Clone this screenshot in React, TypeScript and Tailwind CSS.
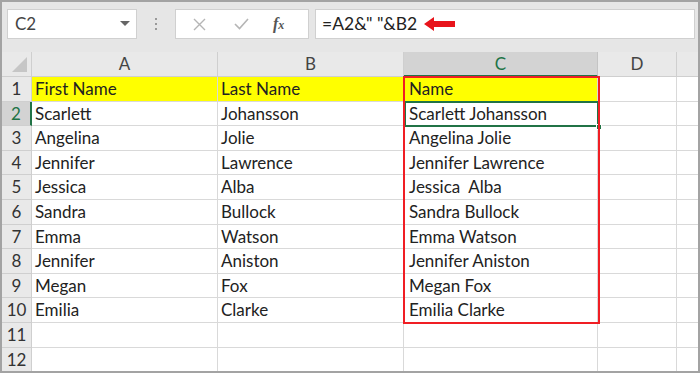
import React from 'react'

const rows: [string, string, string][] = [
  ['First Name', 'Last Name', 'Name'],
  ['Scarlett', 'Johansson', 'Scarlett Johansson'],
  ['Angelina', 'Jolie', 'Angelina Jolie'],
  ['Jennifer', 'Lawrence', 'Jennifer Lawrence'],
  ['Jessica', 'Alba', 'Jessica\u00a0 Alba'],
  ['Sandra', 'Bullock', 'Sandra Bullock'],
  ['Emma', 'Watson', 'Emma Watson'],
  ['Jennifer', 'Aniston', 'Jennifer Aniston'],
  ['Megan', 'Fox', 'Megan Fox'],
  ['Emilia', 'Clarke', 'Emilia Clarke'],
  ['', '', ''],
  ['', '', ''],
]

const font = { fontFamily: 'Lato, "Open Sans", sans-serif' }

export default function App() {
  return (
    <div className="w-[700px] h-[373px] overflow-hidden bg-[#e6e6e6] border-2 border-[#a3a3a3] flex flex-col" style={font}>
      {/* formula bar */}
      <div className="flex items-start h-[50px] shrink-0 pl-[5px] pr-[3px] pt-[7px]">
        <div className="w-[130px] h-[30px] bg-white border border-[#d0d0d0] flex items-center justify-between pl-[7px] pr-[6px]">
          <span className="text-[17px] text-[#444]">C2</span>
          <svg width="10" height="6" viewBox="0 0 10 6"><path d="M0 0 L10 0 L5 5 Z" fill="#666" /></svg>
        </div>
        <div className="w-[38px] h-[30px] flex flex-col items-center justify-center gap-[3px]">
          <span className="w-[2px] h-[2px] bg-[#999]" />
          <span className="w-[2px] h-[2px] bg-[#999]" />
          <span className="w-[2px] h-[2px] bg-[#999]" />
        </div>
        <div className="w-[134px] h-[30px] bg-white border border-[#d0d0d0] flex items-center">
          <svg className="ml-[17px]" width="13" height="13" viewBox="0 0 13 13"><path d="M1 1 L12 12 M12 1 L1 12" stroke="#b5b5b5" strokeWidth="1.4" /></svg>
          <svg className="ml-[28px]" width="15" height="12" viewBox="0 0 15 12"><path d="M1 6 L5.5 10.5 L14 1" stroke="#b5b5b5" strokeWidth="1.6" fill="none" /></svg>
          <span className="ml-[24px] text-[16px] italic text-[#555] font-bold" style={{ fontFamily: '"Liberation Serif", serif' }}>f<span className="text-[12px]">x</span></span>
        </div>
        <div className="ml-[6px] flex-1 h-[30px] bg-white border border-[#d0d0d0] flex items-center pl-[6px]">
          <span className="text-[17.5px] text-[#222]">=A2&amp;" "&amp;B2</span>
          <svg className="ml-[7px]" width="31" height="14" viewBox="0 0 31 14"><path d="M0 7 L10 0 L10 4 L31 4 L31 10 L10 10 L10 14 Z" fill="#e8141b" /></svg>
        </div>
      </div>

      {/* grid */}
      <div className="relative flex-1 bg-white">
        <div className="flex h-[25px] bg-[#e9e9e9] text-[17px] text-[#444]">
          <div className="w-[30px] shrink-0 border-r border-b border-[#cfcfcf] relative">
            <svg className="absolute right-[4px] bottom-[4px]" width="15" height="15" viewBox="0 0 15 15"><path d="M15 0 L15 15 L0 15 Z" fill="#c6c6c6" /></svg>
          </div>
          <div className="w-[186px] shrink-0 border-r border-b border-[#cfcfcf] flex items-center justify-center">A</div>
          <div className="w-[186px] shrink-0 border-r border-b border-[#cfcfcf] flex items-center justify-center">B</div>
          <div className="w-[194px] shrink-0 border-r border-[#c4c4c4] border-b-2 border-b-[#217346] bg-[#d3d3d3] flex items-center justify-center text-[#217346]">C</div>
          <div className="w-[79px] shrink-0 border-r border-b border-[#cfcfcf] flex items-center justify-center">D</div>
          <div className="flex-1 border-b border-[#cfcfcf]" />
        </div>
        {rows.map((r, i) => {
          const sel = i === 1
          const hdr = i === 0
          return (
            <div key={i} className="flex h-[24.6px] text-[17px] text-[#222]">
              <div className={`w-[30px] shrink-0 border-b border-[#cfcfcf] flex items-center justify-center ${sel ? 'bg-[#d3d3d3] text-[#217346] border-r-2 border-r-[#217346]' : 'bg-[#e9e9e9] text-[#333] border-r'}`}>{i + 1}</div>
              <div className={`w-[186px] shrink-0 border-r border-b border-[#d9d9d9] flex items-center pl-[3px] ${hdr ? 'bg-[#ffff00]' : ''}`}>{r[0]}</div>
              <div className={`w-[186px] shrink-0 border-r border-b border-[#d9d9d9] flex items-center pl-[3px] ${hdr ? 'bg-[#ffff00]' : ''}`}>{r[1]}</div>
              <div className={`w-[194px] shrink-0 border-r border-b border-[#d9d9d9] flex items-center pl-[5px] ${hdr ? 'bg-[#ffff00]' : ''}`}>{r[2]}</div>
              <div className="w-[79px] shrink-0 border-r border-b border-[#d9d9d9]" />
              <div className="flex-1 border-b border-[#d9d9d9]" />
            </div>
          )
        })}

        {/* active cell C2 */}
        <div className="absolute left-[402px] top-[49px] w-[195px] h-[26px] border-2 border-[#217346]" />
        <div className="absolute left-[594px] top-[72px] w-[6px] h-[6px] bg-[#217346] border border-white" />
        {/* red highlight box */}
        <div className="absolute left-[401px] top-[24px] w-[197px] h-[248px] border-2 border-[#f01e24]" />
      </div>
    </div>
  )
}
